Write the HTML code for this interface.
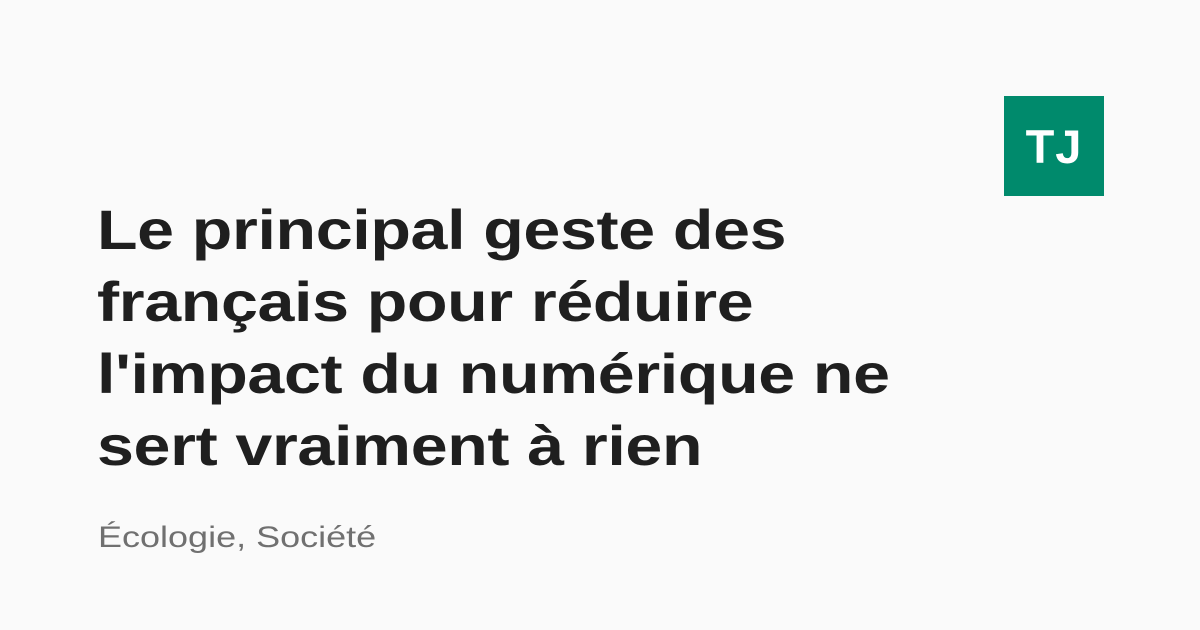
<!DOCTYPE html>
<html><head><meta charset="utf-8"><style>
html,body{margin:0;padding:0;}
body{width:1200px;height:630px;background:#fafafa;position:relative;overflow:hidden;font-family:"Liberation Sans",sans-serif;}
.logo{position:absolute;left:1004px;top:96px;width:100px;height:100px;background:#008a6c;color:#fff;font-weight:bold;font-size:47px;display:flex;align-items:center;justify-content:center;letter-spacing:1px;}
h1{position:absolute;left:97px;top:194px;margin:0;font-size:56px;line-height:72px;font-weight:bold;color:#1f1f1f;letter-spacing:-0.3px;transform:scaleX(1.185);transform-origin:0 0;white-space:nowrap;}
.cat{position:absolute;left:98px;top:521px;font-size:30px;color:#707070;transform:scaleX(1.2);transform-origin:0 0;white-space:nowrap;}
</style></head><body>
<div class="logo">TJ</div>
<h1>Le principal geste des<br>français pour réduire<br>l'impact du numérique ne<br>sert vraiment à rien</h1>
<div class="cat">Écologie, Société</div>
</body></html>
